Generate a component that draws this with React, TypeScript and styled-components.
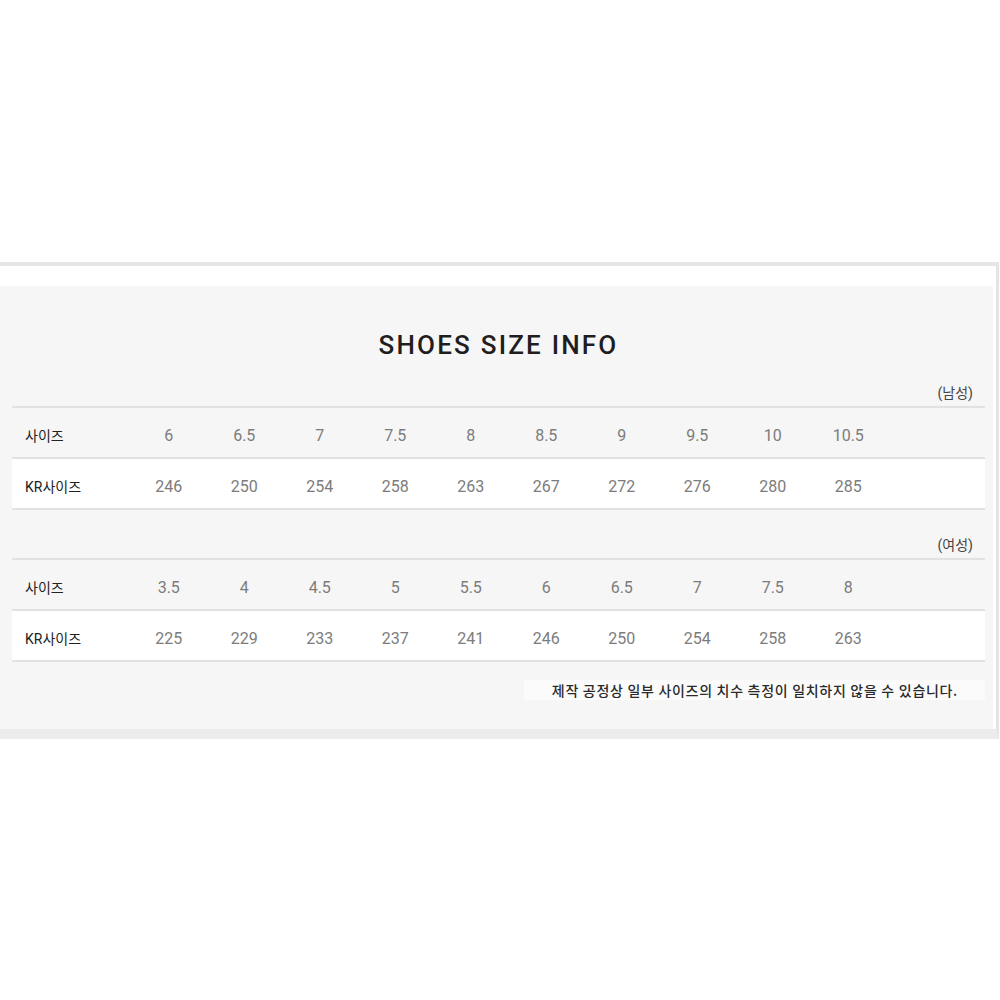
import styled, { createGlobalStyle } from "styled-components";

const GlobalStyle = createGlobalStyle`
  html, body {
    margin: 0;
    padding: 0;
    background: #ffffff;
  }
  body {
    font-family: Roboto, "Noto Sans CJK KR", sans-serif;
  }
`;

type SizeRow = { label: string; values: string[]; white?: boolean };

const men: SizeRow[] = [
  { label: "사이즈", values: ["6", "6.5", "7", "7.5", "8", "8.5", "9", "9.5", "10", "10.5"] },
  { label: "KR사이즈", values: ["246", "250", "254", "258", "263", "267", "272", "276", "280", "285"], white: true },
];

const women: SizeRow[] = [
  { label: "사이즈", values: ["3.5", "4", "4.5", "5", "5.5", "6", "6.5", "7", "7.5", "8"] },
  { label: "KR사이즈", values: ["225", "229", "233", "237", "241", "246", "250", "254", "258", "263"], white: true },
];

function SizeTable({ rows }: { rows: SizeRow[] }) {
  return (
    <Table>
      {rows.map((row) => (
        <Row key={row.label} $white={row.white}>
          <Label>{row.label}</Label>
          {row.values.map((v, i) => (
            <Value key={i}>{v}</Value>
          ))}
          <Value />
        </Row>
      ))}
    </Table>
  );
}

export default function App() {
  return (
    <>
      <GlobalStyle />
      <Page>
        <Frame>
          <Panel>
            <Title>SHOES SIZE INFO</Title>
            <Gender>(남성)</Gender>
            <SizeTable rows={men} />
            <Gender $gap>(여성)</Gender>
            <SizeTable rows={women} />
            <Note>
              <span>제작 공정상 일부 사이즈의 치수 측정이 일치하지 않을 수 있습니다.</span>
            </Note>
          </Panel>
        </Frame>
      </Page>
    </>
  );
}

const Page = styled.div`
  padding-top: 262px;
  width: 1000px;
  height: 738px;
`;

const Frame = styled.div`
  width: 993px;
  border-top: 4px solid #e6e6e6;
  border-right: 3px solid #e4e4e4;
  border-bottom: 10px solid #ececec;
  padding-top: 20px;
  padding-right: 3px;
  background: #ffffff;
`;

const Panel = styled.div`
  background: #f6f6f6;
  padding: 44px 8px 29px 12px;
  display: flex;
  flex-direction: column;
`;

const Title = styled.h1`
  margin: 0;
  text-align: center;
  font-family: Roboto, sans-serif;
  font-weight: 500;
  font-size: 26px;
  line-height: 30px;
  letter-spacing: 2.2px;
  color: #1e1e1e;
`;

const Gender = styled.div<{ $gap?: boolean }>`
  margin-top: ${(p) => (p.$gap ? "25px" : "23px")};
  margin-bottom: 3px;
  text-align: right;
  padding-right: 12px;
  font-family: Roboto, "Noto Sans CJK KR", sans-serif;
  font-size: 14px;
  line-height: 20px;
  color: #444;
`;

const Table = styled.div`
  display: flex;
  flex-direction: column;
  border-top: 2px solid #e2e2e2;
`;

const Row = styled.div<{ $white?: boolean }>`
  box-sizing: border-box;
  display: grid;
  grid-template-columns: 119px repeat(10, 75.5px) 1fr;
  align-items: center;
  height: 51px;
  padding-top: 5px;
  border-bottom: 2px solid #e2e2e2;
  background: ${(p) => (p.$white ? "#ffffff" : "#f6f6f6")};
`;

const Label = styled.div`
  padding-left: 13px;
  font-family: Roboto, "Noto Sans CJK KR", sans-serif;
  font-size: 14px;
  font-weight: 400;
  color: #222;
`;

const Value = styled.div`
  text-align: center;
  font-family: Roboto, sans-serif;
  font-size: 16px;
  color: #7c7c7c;
`;

const Note = styled.div`
  margin-top: 18px;
  display: flex;
  justify-content: flex-end;

  span {
    background: #fbfbfb;
    padding: 0 27px 0 28px;
    font-family: "Noto Sans CJK KR", sans-serif;
    font-size: 14px;
    letter-spacing: 0.7px;
    font-weight: 500;
    line-height: 20px;
    color: #2a2a2a;
  }
`;
